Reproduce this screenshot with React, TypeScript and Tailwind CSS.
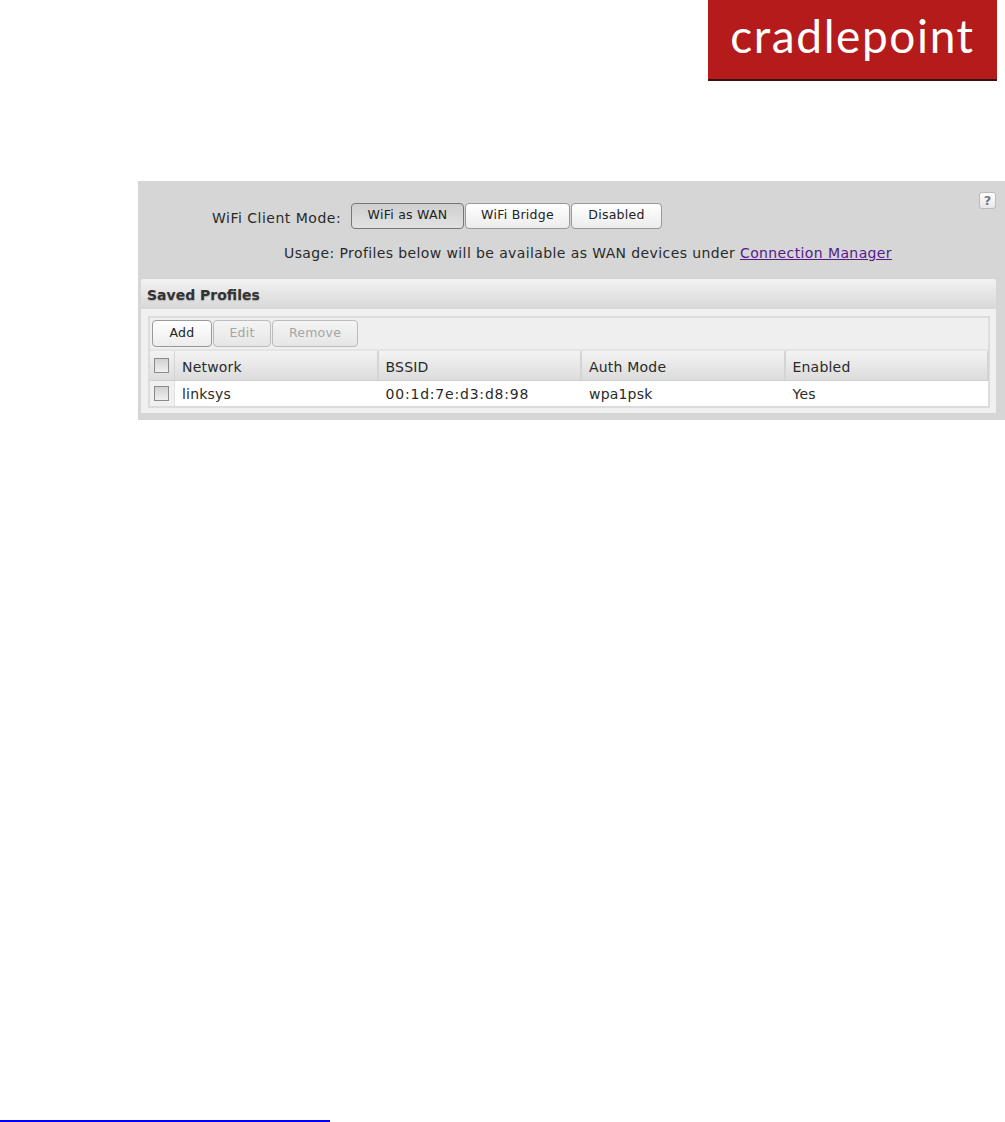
import React from "react";

const font = "font-['DejaVu_Sans',sans-serif]";

function Btn({ label, w, active, disabled, h = "h-[26px]" }: { label: string; w: string; active?: boolean; disabled?: boolean; h?: string }) {
  const look = active
    ? "bg-gradient-to-b from-[#cfcfcf] to-[#e2e2e2] border-[#777] text-[#222]"
    : disabled
      ? "bg-gradient-to-b from-[#f4f4f4] to-[#e6e6e6] border-[#bbb] text-[#a5a5a5]"
      : "bg-gradient-to-b from-[#ffffff] to-[#ececec] border-[#999] text-[#222]";
  return (
    <div className={`${w} ${h} ${look} flex items-center justify-center rounded-[4px] border pb-px text-[12.5px] tracking-[0.25px] shrink-0`}>
      {label}
    </div>
  );
}

function Check() {
  return <div className="h-[15px] w-[15px] border border-[#8a8a8a] bg-gradient-to-b from-[#d2d2d2] to-[#efefef]" />;
}

function Row({ cells, header }: { cells: string[]; header?: boolean }) {
  return (
    <div className={`flex ${header ? "h-[30px] bg-gradient-to-b from-[#f3f3f3] to-[#dcdcdc] border-b border-[#cfcfcf]" : "h-[25px] bg-white"} text-[14px] text-[#2a2a2a]`}>
      <div className={`w-[25px] shrink-0 flex items-center justify-center border-r pr-[2px] ${header ? "border-[#d4d4d4]" : "border-[#e2e2e2] bg-[#f0f0f0]"}`}>
        <Check />
      </div>
      {cells.map((c) => (
        <div
          key={c}
          className={`w-[203.5px] shrink-0 flex items-center pl-[7px] ${header ? "border-r-2 border-[#d4d4d4] pt-[3px] tracking-[0.2px]" : c === "00:1d:7e:d3:d8:98" ? "pt-[2px] tracking-[0.8px]" : "pt-[2px] tracking-[0.2px]"}`}
        >
          {c}
        </div>
      ))}
    </div>
  );
}

export default function App() {
  return (
    <div className={`${font} flex h-[1122px] w-[1005px] flex-col overflow-hidden bg-white`}>
      <div className="flex justify-end pr-[8px]">
        <div className="flex h-[81px] w-[289px] items-start justify-center border-b-2 border-[#3a1010] bg-[#b51b1b]">
          <span className="mt-[7px] font-['Lato',sans-serif] text-[46px] leading-[58px] font-normal tracking-[1.6px] text-white">cradlepoint</span>
        </div>
      </div>

      <div className="mt-[100px] ml-[138px] h-[239px] bg-[#d6d6d6] pt-[11px] pr-[9px] pl-[3px]">
        <div className="relative h-[87px]">
          <div className="absolute top-0 right-0 flex h-[17px] w-[17px] items-center justify-center rounded-[3px] border border-[#bbb] bg-gradient-to-b from-[#fff] to-[#e8e8e8] text-[13px] font-bold text-[#777]">?</div>
          <div className="flex items-center pt-[11px] pl-[71px]">
            <span className="w-[139px] pt-[4px] text-[14px] tracking-[0.5px] text-[#2a2a2a]">WiFi Client Mode:</span>
            <div className="flex gap-px">
              <Btn label="WiFi as WAN" w="w-[113px]" active />
              <Btn label="WiFi Bridge" w="w-[105px]" />
              <Btn label="Disabled" w="w-[91px]" />
            </div>
          </div>
          <div className="mt-[14px] pl-[143px] text-[14px] leading-[20px] tracking-[0.39px] text-[#2a2a2a]">
            Usage: Profiles below will be available as WAN devices under{" "}
            <a className="text-[#551a8b] underline">Connection Manager</a>
          </div>
        </div>

        <div className="h-[134px] overflow-hidden rounded-t-[3px] bg-[#f0f0f0]">
          <div className="flex h-[30px] items-center bg-gradient-to-b from-[#f2f2f2] to-[#d8d8d8] pt-[2px] pl-[6px] text-[14px] font-bold text-[#333] [text-shadow:0_1px_1px_#aaa]">
            Saved Profiles
          </div>
          <div className="mt-[7px] mr-[6px] ml-[7px] border-2 border-[#dcdcdc]">
            <div className="flex h-[33px] items-center gap-px border-b-2 border-[#e4e4e4] bg-[#efefef] pl-[2px]">
              <Btn label="Add" w="w-[60px]" h="h-[27px]" />
              <Btn label="Edit" w="w-[58px]" h="h-[27px]" disabled />
              <Btn label="Remove" w="w-[86px]" h="h-[27px]" disabled />
            </div>
            <Row header cells={["Network", "BSSID", "Auth Mode", "Enabled"]} />
            <Row cells={["linksys", "00:1d:7e:d3:d8:98", "wpa1psk", "Yes"]} />
          </div>
        </div>
      </div>

      <div className="mt-auto h-[2px] w-[330px] bg-[#0000ff]" />
    </div>
  );
}
